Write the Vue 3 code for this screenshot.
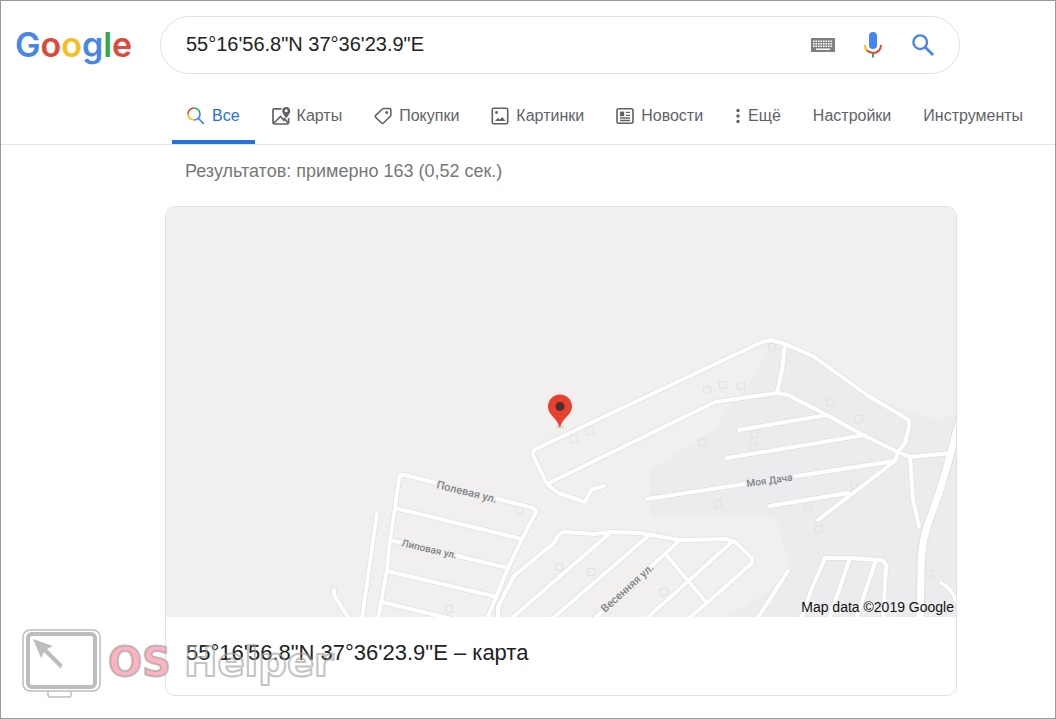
<template>
  <div class="page">
    <header class="header">
      <a href="#" class="logo" aria-label="Google">
        <span class="blue">G</span><span class="red">o</span><span class="yellow">o</span><span class="blue">g</span><span class="green">l</span><span class="red">e</span>
      </a>
      <form class="search" role="search" @submit.prevent>
        <input v-model="query" type="text" class="search-input" aria-label="Поиск" />
        <button type="button" class="icon-btn" aria-label="Экранная клавиатура">
          <svg width="24" height="14" viewBox="0 0 24 14">
            <rect width="24" height="14" fill="#808080" />
            <path d="M2 3.2h20M2 5.7h20M2 8.2h20" stroke="#fff" stroke-width="1.4" stroke-dasharray="1.6 .9" />
            <path d="M5 11.2h14" stroke="#fff" stroke-width="1.4" />
          </svg>
        </button>
        <button type="button" class="icon-btn" aria-label="Голосовой поиск">
          <svg width="18" height="26" viewBox="0 0 18 26">
            <rect x="5" y="0" width="8" height="17" rx="4" fill="#4285f4" />
            <path d="M1 13c0 2.500.8 4.400 2.200 5.800" fill="none" stroke="#fbbc05" stroke-width="2" />
            <path d="M3 18.600C4.500 20 6.500 21 9 21c4.600 0 8-3.400 8-8" fill="none" stroke="#ea4335" stroke-width="2" />
            <path d="M9 21.500v4" stroke="#34a853" stroke-width="2" />
          </svg>
        </button>
        <button type="submit" class="icon-btn" aria-label="Найти">
          <svg width="22" height="22" viewBox="0 0 22 22" fill="none" stroke="#4a84e6">
            <circle cx="8.200" cy="8.200" r="6.800" stroke-width="2.400" />
            <path d="M13 13l8 8" stroke-width="2.800" />
          </svg>
        </button>
      </form>
    </header>

    <nav class="tabs">
      <a v-for="tab in tabs" :key="tab.label" href="#" class="tab" :class="{ active: tab.icon === 'all' }">
        <svg v-if="tab.icon === 'all'" class="tab-icon" viewBox="0 0 18 18" fill="none" stroke-width="1.700">
          <path d="M1 7A6 6 0 0 1 7 1" stroke="#ea4335" />
          <path d="M7 1a6 6 0 0 1 6 6" stroke="#34a853" />
          <path d="M1 7a6 6 0 0 0 6 6" stroke="#fbbc05" />
          <path d="M7 13a6 6 0 0 0 6-6M11.200 11.200l5.600 5.600" stroke="#4285f4" />
        </svg>
        <svg v-else-if="tab.icon === 'maps'" class="tab-icon" viewBox="0 0 18 18">
          <path d="M9.500 1.800H2.300Q1 1.800 1 3v12.700Q1 17 2.300 17h13q1.300 0 1.300-1.300V11" fill="none" stroke="#5f6368" stroke-width="1.700" />
          <path d="M2 16l6.500-6.500 4 4.500M12 11l4 5" fill="none" stroke="#5f6368" stroke-width="1.700" />
          <path fill-rule="evenodd" d="M14.200 0C11.900 0 10.200 1.700 10.200 3.900c0 2.700 4 7.200 4 7.200s4-4.500 4-7.200C18.200 1.700 16.500 0 14.200 0zm0 5.300a1.500 1.500 0 1 1 0-3 1.500 1.500 0 0 1 0 3z" fill="#5f6368" />
        </svg>
        <svg v-else-if="tab.icon === 'shopping'" class="tab-icon" viewBox="0 0 18 18">
          <path d="M9.500 1.500h6q1.300 0 1.300 1.300v5.400q0 .6-.5 1.100l-6.800 6.700q-.9.9-1.900 0L1.700 10.300q-.9-.9 0-1.900l6.600-6.400q.5-.5 1.200-.5z" fill="none" stroke="#5f6368" stroke-width="1.600" />
          <circle cx="12.700" cy="5.400" r="1.500" fill="#5f6368" />
        </svg>
        <svg v-else-if="tab.icon === 'images'" class="tab-icon" viewBox="0 0 18 18">
          <rect x="1.300" y="1.300" width="15.400" height="15.400" rx="1.500" fill="none" stroke="#5f6368" stroke-width="1.600" />
          <circle cx="5.500" cy="5.500" r="1.400" fill="#5f6368" />
          <path d="M4 14l2.800-3 2 1.600L11.300 10l3.200 4z" fill="#5f6368" />
        </svg>
        <svg v-else-if="tab.icon === 'news'" class="tab-icon" viewBox="0 0 18 18">
          <rect x="1" y="1.800" width="16" height="14.400" rx="1.500" fill="none" stroke="#5f6368" stroke-width="1.600" />
          <path d="M4 4.600h4.200v4.600H4z" fill="#5f6368" />
          <path d="M9.800 5.400H14M9.800 8.400H14M4 11h10M4 13.500h10" stroke="#5f6368" stroke-width="1.400" />
        </svg>
        <svg v-else-if="tab.icon === 'more'" class="dots" viewBox="0 0 6 18" fill="#5f6368">
          <circle cx="3" cy="3.500" r="1.700" />
          <circle cx="3" cy="9" r="1.700" />
          <circle cx="3" cy="14.500" r="1.700" />
        </svg>
        <span>{{ tab.label }}</span>
      </a>
    </nav>

    <main class="results">
      <p class="stats">Результатов: примерно 163 (0,52 сек.)</p>
      <section class="card">
        <a href="#" class="map-link" aria-label="Карта">
          <svg class="map" viewBox="166 207 790 410">
            <rect x="166" y="207" width="790" height="410" fill="#f1f0ee" />
            <path
              d="M650 517V471L716 428L732 403L745 390L762 362L771 341L813 356L867 395L920 415L940 420L956 413V617H726L760 597L792 570L775 517Z"
              fill="#ececee"
            />
            <g fill="none" stroke="#e1e1e1" stroke-width="1">
              <path
                v-for="(b, i) in buildings"
                :key="i"
                :d="`M${b[0] - 4} ${b[1] - 3}l7-1 1 7-7 1z`"
              />
            </g>
            <g fill="none" stroke-linejoin="round" stroke-linecap="round">
              <path v-for="(road, i) in roads" :key="'c' + i" :d="road" stroke="#e0e0e0" stroke-width="5.500" />
              <path :d="highway" stroke="#e0e0e0" stroke-width="9" />
              <path v-for="(road, i) in roads" :key="'r' + i" :d="road" stroke="#fff" stroke-width="4" />
              <path :d="highway" stroke="#fff" stroke-width="7" />
            </g>
            <g class="street">
              <text font-size="11" transform="translate(436 488) rotate(14)">Полевая ул.</text>
              <text font-size="10" transform="translate(401 546) rotate(13)">Липовая ул.</text>
              <text font-size="11" transform="translate(605 613) rotate(-42)">Весенняя ул.</text>
              <text class="on-area" font-size="10" transform="translate(747 487) rotate(-8)">Моя Дача</text>
            </g>
            <ellipse cx="560" cy="427" rx="4" ry="1.500" fill="#d8d8d8" />
            <path
              d="M560 394.500c-6.800 0-12 5.200-12 11.800 0 4.600 2.300 7.500 5.400 11 3 3.400 4.800 5.500 5.600 9.200q.7 1.200 1.400 0c.8-3.700 2.800-5.800 5.800-9.200 3.300-3.500 5.800-6.400 5.800-11 0-6.600-5.200-11.800-12-11.800z"
              fill="#e8402f"
            />
            <circle cx="560" cy="406.500" r="4.500" fill="#4b2f2e" />
          </svg>
          <span class="copyright">Map data ©2019 Google</span>
        </a>
        <h2 class="card-title">55°16'56.8"N 37°36'23.9"E – карта</h2>
      </section>
    </main>

    <svg class="watermark" width="316" height="72" viewBox="0 0 316 72" aria-hidden="true">
      <g fill="none" stroke="#bdbdbd">
        <rect x="1" y="1" width="77" height="61" rx="7" stroke-width="1.500" />
        <rect x="6" y="5" width="67" height="53" rx="4" stroke-width="4" />
        <path d="M26 62v4q0 2 2 2h19q2 0 2-2v-4" stroke-width="1.500" />
      </g>
      <path d="M11 10l20 7-6 3 15 15q1 3-2 4L22 23l-3 6z" fill="#bdbdbd" />
      <g class="watermark-text">
        <text class="os" x="86" y="47">OS</text>
        <text class="helper" x="162" y="47">Helper</text>
      </g>
    </svg>
  </div>
</template>

<script setup>
import { ref } from 'vue'

const query = ref('55°16\'56.8"N 37°36\'23.9"E')

const tabs = [
  { label: 'Все', icon: 'all' },
  { label: 'Карты', icon: 'maps' },
  { label: 'Покупки', icon: 'shopping' },
  { label: 'Картинки', icon: 'images' },
  { label: 'Новости', icon: 'news' },
  { label: 'Ещё', icon: 'more' },
  { label: 'Настройки' },
  { label: 'Инструменты' }
]

const roads = [
  // west streets
  'M334 590V595L349 619',
  'M377 513L362 619',
  'M378 619L387 570L390 540L395 508L399 479Q400 474 405 475L533 508Q537 510 535 514L522 539L508 568L487 619',
  'M395 508L522 539',
  'M390 540L508 568',
  'M387 571L497 597',
  'M382 602L452 619',
  // south streets
  'M498 619V607L514 576L555 542Q558 532 565 532L595 534L610 532L640 533L680 540L727 539L735 542L752 558V563L707 603L688 619',
  'M610 533L520 611L511 619',
  'M648 536L552 619',
  'M680 540L594 619',
  'M733 541L646 619',
  'M667 556L707 603',
  // main loop
  'M604 486L591 490L585 502L558 493L547 484L533 455Q532 451 538 448L713 365L762 342L771 340L785 344L813 356L867 395L909 420V427L905 443L898 452L895 461L818 520',
  'M547 484L715 402L777 393L788 395L827 415L863 435L898 452L910 457L952 453',
  'M785 344L782 370L777 393',
  'M827 415L739 430',
  'M865 435L727 458',
  'M895 461L647 499',
  'M770 506L848 493',
  'M910 457L913 500L919 526',
  // south-east block
  'M788 571L757 619',
  'M801 619L812 588L825 558H850L880 560Q886 561 886 567L883 619',
  'M850 558L829 619',
  'M876 560L856 619',
  'M941 583Q951 587 956 601'
]

const highway = 'M960 418L948 463L940 490L927 527Q921 545 921 570L920 622'

const buildings = [
  [574, 439], [590, 431], [707, 390], [723, 385], [741, 386], [702, 442],
  [754, 434], [754, 447], [718, 504], [772, 347], [830, 402], [859, 419],
  [854, 485], [808, 506], [819, 529], [929, 574], [519, 510], [559, 567],
  [591, 572], [664, 592], [449, 609]
]
</script>

<style>
body {
  margin: 0;
  background: #fff;
}
</style>

<style scoped>
.page {
  position: relative;
  box-sizing: border-box;
  min-height: 100vh;
  border: 1px solid #999;
  font-family: 'Liberation Sans', Arial, sans-serif;
  color: #222;
}

.header {
  display: flex;
  align-items: center;
  padding: 15px 95px 0 14px;
}

.logo {
  display: flex;
  flex: 0 0 145px;
  font-family: Inter, sans-serif;
  font-size: 34px;
  font-weight: 600;
  line-height: 56px;
  text-decoration: none;
}

.blue {
  color: #4a86e8;
}

.red {
  color: #dc4a3d;
}

.yellow {
  color: #f4bf27;
}

.green {
  color: #3aa757;
}

.search {
  display: flex;
  flex: 1;
  align-items: center;
  box-sizing: border-box;
  height: 58px;
  min-width: 0;
  padding: 0 19px 0 25px;
  border: 1px solid #dfe1e5;
  border-radius: 29px;
}

.search-input {
  flex: 1;
  min-width: 0;
  padding: 0 0 2px;
  border: none;
  outline: none;
  background: none;
  color: #222;
  font-family: inherit;
  font-size: 20px;
}

.icon-btn {
  display: flex;
  align-items: center;
  justify-content: center;
  width: 34px;
  height: 34px;
  margin-left: 16px;
  padding: 0;
  border: none;
  background: none;
  cursor: pointer;
}

.tabs {
  display: flex;
  gap: 2px;
  margin-top: 14px;
  padding-left: 171px;
  border-bottom: 1px solid #e6e6e6;
}

.tab {
  display: flex;
  align-items: center;
  gap: 7px;
  padding: 4px 15px 0;
  border-bottom: 4px solid transparent;
  color: #5f6368;
  font-size: 16px;
  line-height: 48px;
  text-decoration: none;
  white-space: nowrap;
}

.tab.active {
  border-bottom-color: #2672dd;
  color: #2672dd;
}

.tab-icon {
  width: 18px;
  height: 18px;
  overflow: visible;
}

.dots {
  width: 6px;
  height: 18px;
}

.results {
  padding: 0 98px 22px 164px;
}

.stats {
  margin: 0;
  padding: 12px 20px 21px;
  color: #777;
  font-size: 18px;
  line-height: 28px;
}

.card {
  overflow: hidden;
  border: 1px solid #dfe1e5;
  border-radius: 10px;
}

.map-link {
  display: block;
  position: relative;
}

.map {
  display: block;
  width: 100%;
}

.street {
  fill: #80868b;
  font-family: Roboto, sans-serif;
  font-weight: 500;
}

.street text {
  paint-order: stroke;
  stroke: #f1f0ee;
  stroke-width: 4px;
}

.street .on-area {
  stroke: #ececee;
}

.copyright {
  position: absolute;
  right: 2px;
  bottom: 2px;
  color: #111;
  font-size: 14px;
  line-height: 16px;
}

.card-title {
  margin: 0;
  padding: 20px 20px 26px;
  color: #222;
  font-size: 22px;
  font-weight: 400;
  line-height: 32px;
}

.watermark {
  position: absolute;
  left: 21px;
  bottom: 17px;
  pointer-events: none;
}

.watermark-text {
  font-family: 'DejaVu Sans', sans-serif;
  font-size: 40px;
  font-weight: 700;
  stroke: #a0a0a0;
  stroke-opacity: 0.65;
  stroke-width: 2px;
  stroke-linejoin: round;
}

.os {
  fill: #ffb3c0;
}

.helper {
  fill: none;
}
</style>
